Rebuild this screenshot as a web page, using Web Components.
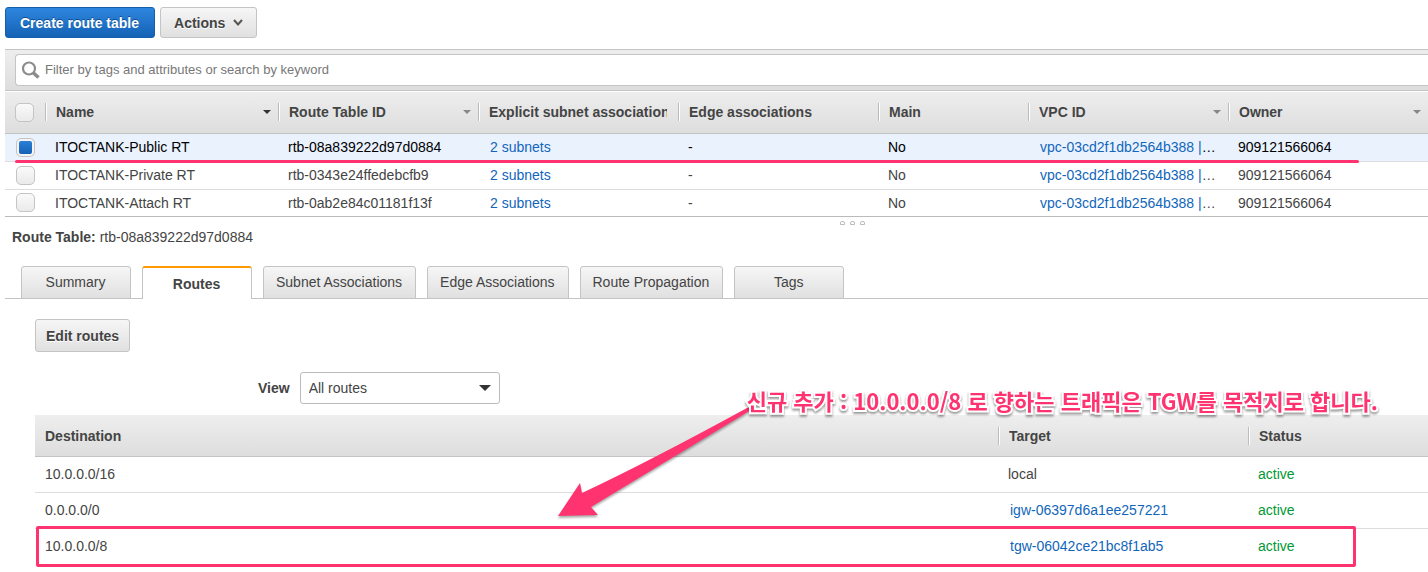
<!DOCTYPE html>
<html lang="en">
<head>
<meta charset="utf-8">
<title>Route Tables</title>
<style>
  body {
    margin: 0;
    background: #fff;
    color: #444;
    font: 14px/18px "Liberation Sans", Arial, "Noto Sans CJK KR", sans-serif;
    --link: #1166bb;
    --mark: #ff3370;
    --face: linear-gradient(#f6f6f6, #e0e0e0);
    --head: linear-gradient(#eee, #ddd);
  }
</style>
</head>
<body>
<vpc-console></vpc-console>

<script>
const define = (name, html, setup) => customElements.define(name, class extends HTMLElement {
  connectedCallback() {
    if (this.shadowRoot) return;
    const template = document.createElement('template');
    template.innerHTML = html;
    this.attachShadow({ mode: 'open' }).append(template.content.cloneNode(true));
    if (setup) setup.call(this, this.shadowRoot);
  }
});

define('console-button', `
  <style>
    :host { display: inline-block; }
    button {
      display: flex; align-items: center; gap: 8px; box-sizing: border-box;
      height: var(--button-height, 31px); padding: 0 var(--button-pad, 13px);
      border: 1px solid #c4c4c4; border-radius: 3px;
      background: var(--face); color: #444;
      font: bold 14px/18px "Liberation Sans", Arial, sans-serif;
      text-shadow: 0 1px 0 #fff; white-space: nowrap;
    }
    :host([primary]) button {
      padding: 0 15px 0 14px;
      border-color: #1460aa; background: linear-gradient(#2e86de, #1462b5);
      color: #fff; text-shadow: 0 -1px 0 #0d4c8f;
    }
  </style>
  <button type="button"><slot></slot></button>`);

define('sort-caret', `
  <style>
    :host { display: block; flex: none; border: 4px solid transparent; border-bottom: 0; border-top-color: #888; }
    :host([active]) { border-top-color: #333; }
  </style>`);

define('column-head', `
  <style>
    :host {
      display: flex; align-items: center; height: 18px; padding: 0 7px 0 10px;
      border-left: 1px solid #bbb; box-shadow: inset 1px 0 #fff;
      font-weight: bold; white-space: nowrap;
    }
    span { flex: 1; overflow: hidden; margin-right: 4px; }
  </style>
  <span><slot></slot></span><slot name="caret"></slot>`);

define('filter-bar', `
  <style>
    :host { display: block; padding: 4px 0 4px 10px; border-top: 1px solid #c4c4c4; background: linear-gradient(#eee, #ddd); }
    label {
      display: flex; align-items: center; box-sizing: border-box; height: 32px; padding-left: 6px; gap: 5px;
      border: 1px solid #c4c4c4; border-right: 0; border-radius: 4px 0 0 4px; background: #fff;
    }
    svg { flex: none; }
    input {
      flex: 1; min-width: 0; border: 0; padding: 0; outline: 0; background: none;
      font: 13px/18px "Liberation Sans", Arial, sans-serif; color: #444;
    }
    input::placeholder { color: #777; opacity: 1; }
  </style>
  <label>
    <svg width="18" height="18" viewBox="0 0 18 18" fill="none" stroke="#8c8c8c" aria-hidden="true">
      <circle cx="7" cy="7.5" r="6" stroke-width="2.2"/>
      <path d="M11.5 12l5 4.5" stroke-width="3.6"/>
    </svg>
    <input type="text" aria-label="Filter route tables" placeholder="Filter by tags and attributes or search by keyword">
  </label>`);

define('route-table-list', `
  <style>
    :host { display: block; position: relative; }
    table { width: 100%; table-layout: fixed; border-spacing: 0; border-bottom: 1px solid #bbb; }
    th, td { padding: 0; text-align: left; font-weight: normal; }
    th { height: 42px; border-top: 1px solid #c4c4c4; border-bottom: 1px solid #c4c4c4; }
    thead tr { background: var(--head); }
    th { box-shadow: inset 0 1px #fff; }
    .check { width: 40px; } .wide { width: 200px; } .main { width: 150px; }
    td {
      height: 25px; padding: 0 10px 2px; border-bottom: 1px solid #ddd;
      overflow: hidden; white-space: nowrap;
    }
    tbody tr:last-child td { padding-bottom: 1px; border-bottom: 0; }
    .selected td { background: #eaf2fe; color: #000; }
    a { color: var(--link); text-decoration: none; padding-left: 2px; }
    td.vpc { padding-right: 0; }
    input {
      appearance: none; display: block; box-sizing: border-box; width: 19px; height: 19px; margin: 0;
      border: 1px solid #c4c4c4; border-radius: 5px; background: linear-gradient(#fafafa, #eaeaea);
    }
    th input { margin-left: 10px; }
    tbody td:first-child { padding: 0 0 0 11px; }
    input:checked { padding: 2px; background: linear-gradient(#2b7fd6, #1462b5) content-box, #f4f4f4; }
    .underline {
      position: absolute; top: 70px; left: 10px; right: 69px; height: 3px;
      border-radius: 2px; background: var(--mark);
    }
  </style>
  <table>
    <thead><tr>
      <th class="check"><input type="checkbox" aria-label="Select all"></th>
      <th><column-head>Name<sort-caret slot="caret" active></sort-caret></column-head></th>
      <th class="wide"><column-head>Route Table ID<sort-caret slot="caret"></sort-caret></column-head></th>
      <th class="wide"><column-head>Explicit subnet associations</column-head></th>
      <th class="wide"><column-head>Edge associations</column-head></th>
      <th class="main"><column-head>Main</column-head></th>
      <th class="wide"><column-head>VPC ID<sort-caret slot="caret"></sort-caret></column-head></th>
      <th class="wide"><column-head>Owner<sort-caret slot="caret"></sort-caret></column-head></th>
    </tr></thead>
    <tbody></tbody>
  </table>
  <div class="underline"></div>`, root => {
  const rows = [
    ['ITOCTANK-Public RT', 'rtb-08a839222d97d0884', true],
    ['ITOCTANK-Private RT', 'rtb-0343e24ffedebcfb9'],
    ['ITOCTANK-Attach RT', 'rtb-0ab2e84c01181f13f']
  ];
  root.querySelector('tbody').innerHTML = rows.map(([name, id, on]) => `
    <tr${on ? ' class="selected"' : ''}>
      <td><input type="checkbox" aria-label="${name}"${on ? ' checked' : ''}></td>
      <td>${name}</td><td>${id}</td><td><a href="#subnets">2 subnets</a></td><td>-</td><td>No</td>
      <td class="vpc"><a href="#vpc">vpc-03cd2f1db2564b388 |</a>…</td><td>909121566064</td>
    </tr>`).join('');
});

define('split-grip', `
  <style>
    :host { display: flex; justify-content: center; gap: 5px; padding: 4px 0 0 272px; height: 4px; }
    i { box-sizing: border-box; width: 5px; height: 4px; border: 1px solid #bbb; border-radius: 2px 2px 0 0; }
  </style>
  <i></i><i></i><i></i>`);

define('detail-tabs', `
  <style>
    :host { display: flex; gap: 11px; padding-left: 16px; box-shadow: inset 0 -1px #c4c4c4; }
    button {
      box-sizing: border-box; min-width: 110px; height: 33px; padding: 0 13px 2px 12px;
      border: 1px solid #c4c4c4; border-radius: 3px 3px 0 0; background: var(--face);
      color: #444; font: 14px/18px "Liberation Sans", Arial, sans-serif; white-space: nowrap;
    }
    [aria-selected=true] {
      border-top: 2px solid #ff9900; border-bottom: 0; padding-bottom: 0; background: #fff; font-weight: bold;
    }
  </style>`, function (root) {
  this.setAttribute('role', 'tablist');
  for (const name of ['Summary', 'Routes', 'Subnet Associations', 'Edge Associations', 'Route Propagation', 'Tags']) {
    const tab = document.createElement('button');
    tab.type = 'button';
    tab.setAttribute('role', 'tab');
    tab.setAttribute('aria-selected', name === 'Routes');
    tab.textContent = name;
    root.append(tab);
  }
});

define('view-select', `
  <style>
    :host { display: flex; align-items: center; gap: 10px; }
    label { font-weight: bold; }
    .box { display: grid; align-items: center; width: 200px; }
    select, .box::after { grid-area: 1 / 1; }
    select {
      appearance: none; box-sizing: border-box; width: 100%; height: 32px; padding: 0 8px;
      border: 1px solid #bbb; border-radius: 3px; background: #fff;
      font: 14px/18px "Liberation Sans", Arial, sans-serif; color: #444;
    }
    .box::after {
      content: ""; justify-self: end; margin-right: 9px; pointer-events: none;
      border: 6px solid transparent; border-bottom: 0; border-top-color: #333;
    }
  </style>
  <label for="view">View</label>
  <div class="box"><select id="view"><option>All routes</option></select></div>`);

define('callout-note', `
  <style>
    :host { display: block; pointer-events: none; }
    p {
      margin: 0; white-space: nowrap; color: var(--mark);
      font: bold 22px/32px "Noto Sans CJK KR", sans-serif;
      -webkit-text-stroke: 4px #fff; paint-order: stroke fill;
      filter: drop-shadow(0 2px 1px #0006);
    }
    svg { position: absolute; right: calc(100% - 5px); top: 23px; filter: drop-shadow(0 2px 1px #0005); }
  </style>
  <svg width="194" height="111" viewBox="0 0 194 111" aria-hidden="true">
    <path d="M0 109L22 76L24 86Q90 55 189 1Q193 0 193 3L33 100L40 108Z" fill="#ff3370"/>
  </svg>
  <p><slot></slot></p>`);

define('routes-table', `
  <style>
    :host { display: block; position: relative; }
    table { width: 100%; table-layout: fixed; border-spacing: 0; }
    th, td { padding: 0; text-align: left; }
    thead tr { background: var(--head); }
    th { height: 41px; border-bottom: 1px solid #c4c4c4; }
    th:first-child { padding-left: 10px; }
    .target { width: 250px; } .status { width: 180px; }
    td { height: 33px; padding: 0 10px 2px; border-bottom: 1px solid #ddd; }
    tbody tr:last-child td { border-bottom: 0; }
    a { color: var(--link); text-decoration: none; padding-left: 2px; }
    .active { color: #093; }
    .frame {
      position: absolute; top: 111px; left: 1px; right: 72px; height: 35px;
      border: 3px solid var(--mark); border-radius: 2px;
    }
    callout-note { position: absolute; top: -31px; right: 50px; }
  </style>
  <table>
    <thead><tr>
      <th>Destination</th>
      <th class="target"><column-head>Target</column-head></th>
      <th class="status"><column-head>Status</column-head></th>
    </tr></thead>
    <tbody>
      <tr><td>10.0.0.0/16</td><td>local</td><td class="active">active</td></tr>
      <tr><td>0.0.0.0/0</td><td><a href="#igw">igw-06397d6a1ee257221</a></td><td class="active">active</td></tr>
      <tr><td>10.0.0.0/8</td><td><a href="#tgw">tgw-06042ce21bc8f1ab5</a></td><td class="active">active</td></tr>
    </tbody>
  </table>
  <div class="frame"></div>
  <callout-note lang="ko">신규 추가 : 10.0.0.0/8 로 향하는 트래픽은 TGW를 목적지로 합니다.</callout-note>`);

define('vpc-console', `
  <style>
    :host { display: block; padding: 7px 0 4px 5px; overflow: hidden; }
    .toolbar { display: flex; gap: 5px; padding-bottom: 11px; }
    h1 { margin: 0; padding: 3px 0 20px 7px; font: inherit; }
    .panel { padding: 20px 0 0 30px; }
    .edit { --button-pad: 10px; --button-height: 33px; }
    view-select { padding: 20px 0 11px 223px; }
  </style>
  <div class="toolbar">
    <console-button primary>Create route table</console-button>
    <console-button>Actions
      <svg width="10" height="8" viewBox="0 0 10 8" fill="none" stroke="#555" stroke-width="2" aria-hidden="true"><path d="M1 1l4 4.5L9 1"/></svg>
    </console-button>
  </div>
  <filter-bar></filter-bar>
  <route-table-list></route-table-list>
  <split-grip></split-grip>
  <h1><b>Route Table:</b> rtb-08a839222d97d0884</h1>
  <detail-tabs></detail-tabs>
  <div class="panel">
    <console-button class="edit">Edit routes</console-button>
    <view-select></view-select>
    <routes-table></routes-table>
  </div>`);
</script>
</body>
</html>
